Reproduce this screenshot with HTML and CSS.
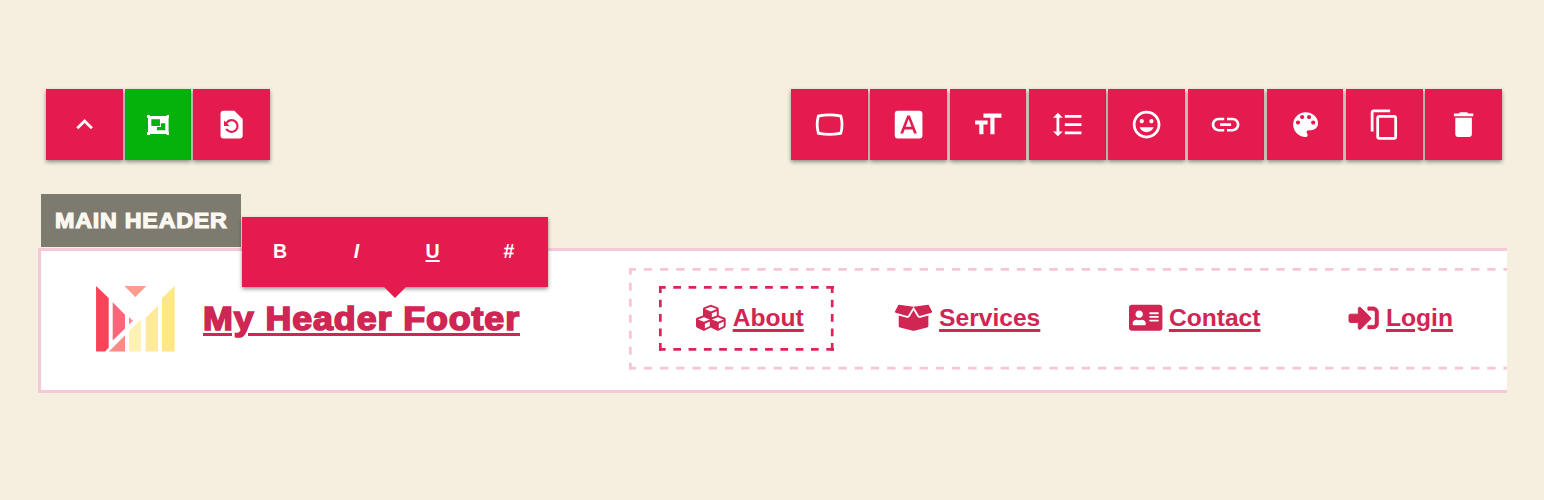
FILE: index.html
```html
<!DOCTYPE html>
<html lang="en">
<head>
<meta charset="utf-8">
<title>Header editor</title>
<link rel="stylesheet" href="styles.css">
</head>
<body>
<div class="toolbars">
  <div class="toolbar">
    <button class="tool" aria-label="Collapse"><svg viewBox="0 0 24 24"><path d="M12 8l-6 6 1.41 1.41L12 10.83l4.59 4.58L18 14z"/></svg></button>
    <button class="tool tool-active" aria-label="Group"><svg class="group-icon" viewBox="0 0 68 60"><path fill-rule="evenodd" d="M1 0h8v3h50V0h8l1 1v8h-3v42h3v8l-1 1h-8v-3H9v3H1l-1-1v-8h3V9H0V1zM13 13v20h26V13zM42 25v11H30v10h25V25z"/></svg></button>
    <button class="tool" aria-label="Restore"><svg viewBox="0 0 24 24"><path d="M14 2H6c-1.1 0-1.99.9-1.99 2L4 20c0 1.1.89 2 1.99 2H18c1.1 0 2-.9 2-2V8l-6-6zm-2 16c-2.05 0-3.81-1.24-4.58-3h1.71c.63.9 1.68 1.5 2.87 1.5 1.93 0 3.5-1.57 3.5-3.5S13.93 9.5 12 9.5c-1.35 0-2.52.78-3.1 1.9l1.6 1.6h-4V9l1.3 1.3C8.69 8.92 10.23 8 12 8c2.76 0 5 2.24 5 5s-2.24 5-5 5z"/></svg></button>
  </div>
  <div class="toolbar">
    <button class="tool" aria-label="Shape"><svg viewBox="0 0 24 24"><path d="M12 6c2.45 0 4.71.2 7.29.64.47 1.78.71 3.58.71 5.36 0 1.78-.24 3.58-.71 5.36-2.58.44-4.84.64-7.29.64s-4.71-.2-7.29-.64C4.24 15.58 4 13.78 4 12c0-1.78.24-3.58.71-5.36C7.29 6.2 9.55 6 12 6m0-2c-2.73 0-5.22.24-7.95.72l-.93.16-.25.9C2.29 7.85 2 9.93 2 12s.29 4.15.87 6.22l.25.89.93.16c2.73.49 5.22.73 7.95.73s5.22-.24 7.95-.72l.93-.16.25-.89c.58-2.08.87-4.16.87-6.23s-.29-4.15-.87-6.22l-.25-.89-.93-.16C17.22 4.24 14.73 4 12 4z"/></svg></button>
    <button class="tool" aria-label="Font"><svg viewBox="0 0 24 24"><path d="M9.93 13.5h4.14L12 7.98zM20 2H4c-1.1 0-2 .9-2 2v16c0 1.1.9 2 2 2h16c1.1 0 2-.9 2-2V4c0-1.1-.9-2-2-2zm-4.05 16.5l-1.14-3H9.17l-1.12 3H5.96l5.11-13h1.86l5.11 13h-2.09z"/></svg></button>
    <button class="tool" aria-label="Text size"><svg viewBox="0 0 24 24"><path d="M9 4v3h5v12h3V7h5V4H9zm-6 8h3v7h3v-7h3V9H3v3z"/></svg></button>
    <button class="tool" aria-label="Line spacing"><svg viewBox="0 0 24 24"><path d="M6 7h2.5L5 3.5 1.5 7H4v10H1.5L5 20.5 8.5 17H6V7zm4-2v2h12V5H10zm0 14h12v-2H10v2zm0-6h12v-2H10v2z"/></svg></button>
    <button class="tool" aria-label="Emoji"><svg viewBox="0 0 24 24"><path d="M11.99 2C6.47 2 2 6.48 2 12s4.47 10 9.99 10C17.52 22 22 17.52 22 12S17.52 2 11.99 2zM12 20c-4.42 0-8-3.58-8-8s3.58-8 8-8 8 3.58 8 8-3.58 8-8 8zm3.5-9c.83 0 1.5-.67 1.5-1.5S16.33 8 15.5 8 14 8.67 14 9.5s.67 1.5 1.5 1.5zm-7 0c.83 0 1.5-.67 1.5-1.5S9.33 8 8.5 8 7 8.67 7 9.5 7.67 11 8.5 11zm3.5 6.5c2.33 0 4.31-1.46 5.11-3.5H6.89c.8 2.04 2.78 3.5 5.11 3.5z"/></svg></button>
    <button class="tool" aria-label="Link"><svg viewBox="0 0 24 24"><path d="M3.9 12c0-1.71 1.39-3.1 3.1-3.1h4V7H7c-2.76 0-5 2.24-5 5s2.24 5 5 5h4v-1.9H7c-1.71 0-3.1-1.39-3.1-3.1zM8 13h8v-2H8v2zm9-6h-4v1.9h4c1.71 0 3.1 1.39 3.1 3.1s-1.39 3.1-3.1 3.1h-4V17h4c2.76 0 5-2.24 5-5s-2.24-5-5-5z"/></svg></button>
    <button class="tool" aria-label="Colors"><svg viewBox="0 0 24 24"><path d="M12 3c-4.97 0-9 4.03-9 9s4.03 9 9 9c.83 0 1.5-.67 1.5-1.5 0-.39-.15-.74-.39-1.01-.23-.26-.38-.61-.38-.99 0-.83.67-1.5 1.5-1.5H16c2.76 0 5-2.24 5-5 0-4.42-4.03-8-9-8zm-5.5 9c-.83 0-1.5-.67-1.5-1.5S5.67 9 6.5 9 8 9.67 8 10.5 7.33 12 6.5 12zm3-4C8.67 8 8 7.33 8 6.5S8.67 5 9.5 5s1.5.67 1.5 1.5S10.33 8 9.5 8zm5 0c-.83 0-1.5-.67-1.5-1.5S13.67 5 14.5 5s1.5.67 1.5 1.5S15.33 8 14.5 8zm3 4c-.83 0-1.5-.67-1.5-1.5S16.67 9 17.5 9s1.5.67 1.5 1.5-.67 1.5-1.5 1.5z"/></svg></button>
    <button class="tool" aria-label="Duplicate"><svg viewBox="0 0 24 24"><path d="M16 1H4c-1.1 0-2 .9-2 2v14h2V3h12V1zm3 4H8c-1.1 0-2 .9-2 2v14c0 1.1.9 2 2 2h11c1.1 0 2-.9 2-2V7c0-1.1-.9-2-2-2zm0 16H8V7h11v14z"/></svg></button>
    <button class="tool" aria-label="Delete"><svg viewBox="0 0 24 24"><path d="M6 19c0 1.1.9 2 2 2h8c1.1 0 2-.9 2-2V7H6v12zM19 4h-3.5l-1-1h-5l-1 1H5v2h14V4z"/></svg></button>
  </div>
</div>

<main class="section">
  <div class="label"><span class="label-text">MAIN HEADER</span></div>
  <header class="panel">
    <div class="brand">
      <svg class="logo" viewBox="33 34 236 197">
        <path fill="#f94358" d="M33 34L71 70V219L60 231H33z"/>
        <path fill="#fb667a" d="M83 83L120 120V162L83 198z"/>
        <path fill="#fb8b98" d="M132 127L144 138 132 150z"/>
        <path fill="#fd9c8e" d="M118 34H184L151 67z"/>
        <path fill="#fb8985" d="M120 182V231H72z"/>
        <path fill="#fdf1b5" d="M168 134V231H132V170z"/>
        <path fill="#feea9c" d="M219 93V231H182V129z"/>
        <path fill="#ffe884" d="M269 34V231H231V71z"/>
      </svg>
      <a class="title">My Header Footer</a>
    </div>
    <nav class="nav">
      <svg class="outline outline-nav"><path d="M-1.4 1.35H900M-1.4 100.1H900" stroke-dasharray="8.3 7.92"/><path d="M1.35 -1.3V101.5" stroke-dasharray="8 8"/></svg>
      <a class="item item-selected">
        <svg class="outline outline-item"><path d="M-1 1.35H175M-1 63.3H175" stroke-dasharray="7.7 7.6"/><path d="M1.35 -.8V64.7M173.2 -.8V64.7" stroke-dasharray="7.7 6.75"/></svg>
        <svg class="icon cubes" viewBox="0 0 512 512"><path d="M488.6 250.2L392 214V105.5c0-15-9.3-28.4-23.4-33.7l-100-37.5c-8.1-3.1-17.1-3.1-25.3 0l-100 37.5c-14.1 5.3-23.4 18.7-23.4 33.7V214l-96.6 36.2C9.3 255.5 0 268.9 0 283.9V394c0 13.6 7.7 26.1 19.9 32.2l100 50c10.1 5.1 22.1 5.1 32.2 0l103.9-52 103.9 52c10.1 5.1 22.1 5.1 32.2 0l100-50c12.2-6.1 19.9-18.6 19.9-32.2V283.9c0-15-9.3-28.4-23.4-33.7zM358 214.8l-85 31.9v-68.2l85-37v73.3zM154 104.1l102-38.2 102 38.2v.6l-102 41.4-102-41.4v-.6zm84 291.1l-85 42.5v-79.1l85-38.8v75.4zm0-112l-102 41.4-102-41.4v-.6l102-38.2 102 38.2v.6zm240 112l-85 42.5v-79.1l85-38.8v75.4zm0-112l-102 41.4-102-41.4v-.6l102-38.2 102 38.2v.6z"/></svg>
        <span class="text">About</span>
      </a>
      <a class="item">
        <svg class="icon box" viewBox="0 0 640 512"><path d="M425.7 256c-16.9 0-32.8-9-41.4-23.4L320 126l-64.2 106.6c-8.7 14.5-24.6 23.5-41.5 23.5-4.5 0-9-.6-13.3-1.9L64 215v178c0 14.7 10 27.5 24.2 31l216.2 54.1c10.2 2.5 20.9 2.5 31 0L551.8 424c14.2-3.6 24.2-16.4 24.2-31V215l-137 39.1c-4.3 1.3-8.8 1.9-13.3 1.9zm212.6-112.2L586.8 41c-3.1-6.2-9.8-9.8-16.7-8.9L320 64l91.7 152.1c3.8 6.3 11.4 9.3 18.5 7.3l197.9-56.5c9.9-2.9 14.7-13.9 10.2-23.1zM53.2 41L1.7 143.8c-4.6 9.2.3 20.2 10.1 23l197.9 56.5c7.1 2 14.7-1 18.5-7.3L320 64 69.8 32.1c-6.9-.8-13.5 2.7-16.6 8.9z"/></svg>
        <span class="text">Services</span>
      </a>
      <a class="item">
        <svg class="icon card" viewBox="0 0 576 512"><path d="M528 32H48C21.5 32 0 53.5 0 80v352c0 26.5 21.5 48 48 48h480c26.5 0 48-21.5 48-48V80c0-26.5-21.5-48-48-48zm-352 96c35.3 0 64 28.7 64 64s-28.7 64-64 64-64-28.7-64-64 28.7-64 64-64zm112 236.8c0 10.6-10 19.2-22.4 19.2H86.4C74 384 64 375.4 64 364.8v-19.2c0-31.8 30.1-57.6 67.2-57.6h5c12.3 5.1 25.7 8 39.8 8s27.6-2.9 39.8-8h5c37.1 0 67.2 25.8 67.2 57.6v19.2zM512 312c0 4.4-3.6 8-8 8H360c-4.4 0-8-3.6-8-8v-16c0-4.4 3.6-8 8-8h144c4.4 0 8 3.6 8 8v16zm0-64c0 4.4-3.6 8-8 8H360c-4.4 0-8-3.6-8-8v-16c0-4.4 3.6-8 8-8h144c4.4 0 8 3.6 8 8v16zm0-64c0 4.4-3.6 8-8 8H360c-4.4 0-8-3.6-8-8v-16c0-4.4 3.6-8 8-8h144c4.4 0 8 3.6 8 8v16z"/></svg>
        <span class="text">Contact</span>
      </a>
      <a class="item">
        <svg class="icon login" viewBox="0 0 512 512"><path stroke="#cf2653" stroke-width="6" d="M416 448h-84c-6.6 0-12-5.4-12-12v-40c0-6.600 5.4-12 12-12h84c17.7 0 32-14.3 32-32V160c0-17.7-14.3-32-32-32h-84c-6.6 0-12-5.4-12-12V76c0-6.6 5.4-12 12-12h84c53 0 96 43 96 96v192c0 53-43 96-96 96z"/><path stroke="#cf2653" stroke-width="16" d="M369 247L201 79c-15-15-41-4.5-41 17v96H24c-13.3 0-24 10.7-24 24v96c0 13.3 10.7 24 24 24h136v96c0 21.5 26 32 41 17l168-168c9.3-9.4 9.3-24.6 0-34z"/></svg>
        <span class="text">Login</span>
      </a>
    </nav>
  </header>
  <div class="popover">
    <span>B</span><span class="italic">I</span><span class="underlined">U</span><span>#</span>
  </div>
</main>
</body>
</html>
```
FILE: styles.css
```css
* { box-sizing: border-box; }
body {
  margin: 0;
  height: 500px;
  overflow: hidden;
  background: #f5efdf;
  font-family: "Liberation Sans", Arial, sans-serif;
  font-weight: bold;
}
svg { display: block; flex: none; }

/* Toolbars */
.toolbars {
  display: flex;
  justify-content: space-between;
  padding: 89px 42px 0 46px;
}
.toolbar { display: flex; gap: 2.7px; }
.tool {
  display: flex;
  align-items: center;
  justify-content: center;
  width: 76.6px;
  height: 71.3px;
  padding: 0;
  border: 0;
  background: #e51b50;
  box-shadow: 0 1.5px 4px rgba(0, 0, 0, .42);
}
.tool svg { width: 33.2px; height: 33.2px; fill: #fff; }
.tool-active { width: 65.4px; background: #05b10b; }
.tool .group-icon { width: 22.6px; height: 20px; }

/* Edited section */
.section { position: relative; padding: 34.2px 37px 0 38px; }
.label {
  display: flex;
  align-items: center;
  width: 200px;
  height: 52.5px;
  margin-left: 2.7px;
  padding-left: 14px;
  background: #7d7a6f;
  color: #fbf8f0;
}
.label-text {
  font-size: 22px;
  letter-spacing: .7px;
  transform: scaleX(1.06);
  transform-origin: left;
  white-space: nowrap;
  -webkit-text-stroke: 1.2px;
}
.panel {
  display: flex;
  height: 145.4px;
  margin-top: 1px;
  overflow: hidden;
  border: solid #f7c8d6;
  border-width: 3px 0 3px 3px;
  background: #fff;
  color: #cf2653;
}
.brand {
  display: flex;
  flex: none;
  width: 588px;
  padding: 35.5px 0 0 55px;
}
.logo { width: 78.7px; height: 65.6px; }
.title {
  height: 38px;
  margin: 14px 0 0 28px;
  font-size: 32.3px;
  line-height: 38px;
  letter-spacing: .8px;
  white-space: nowrap;
  text-decoration: underline 3px;
  text-underline-offset: 3px;
  transform: scaleX(1.11);
  transform-origin: left;
  -webkit-text-stroke: 1.6px;
}
.nav {
  position: relative;
  display: grid;
  flex: none;
  grid-template-columns: 199px 234px 220px 174px;
  align-items: start;
  width: 900px;
  height: 101.5px;
  margin-top: 17.3px;
  padding: 18px 0 0 30px;
}
.outline { position: absolute; top: 0; left: 0; fill: none; stroke-width: 2.7px; }
.outline-nav { width: 900px; height: 101.5px; stroke: #f6c6d5; }
.outline-item { width: 174.5px; height: 64.7px; stroke: #dc2459; }
.item {
  position: relative;
  display: flex;
  align-items: center;
  height: 64.7px;
  padding-left: 37px;
  font-size: 24.6px;
}
.icon { height: 29.7px; margin-top: -1px; fill: #cf2653; overflow: visible; }
.cubes { width: 29.7px; margin-right: 7px; }
.box { width: 37.1px; margin-right: 7px; }
.card { width: 33.4px; margin-right: 6.5px; }
.login { width: 29.7px; margin-right: 7.3px; }
.text {
  margin-top: -2px;
  text-decoration: underline 2.6px;
  text-underline-offset: 3px;
}

/* Text formatting popover */
.popover {
  position: absolute;
  top: 56.7px;
  left: 242px;
  display: grid;
  grid-template-columns: repeat(4, 1fr);
  align-items: center;
  width: 306px;
  height: 70px;
  padding-right: 1px;
  background: #e51b50;
  box-shadow: 0 1.5px 4px rgba(0, 0, 0, .42);
  color: #fff;
  font-size: 19.6px;
  text-align: center;
}
.popover::after {
  content: "";
  position: absolute;
  top: 70px;
  left: 142px;
  border: 11px solid transparent;
  border-top-color: #e51b50;
  border-bottom: 0;
}
.italic { font-style: italic; }
.underlined { text-decoration: underline 2px; text-underline-offset: 2px; }
```
